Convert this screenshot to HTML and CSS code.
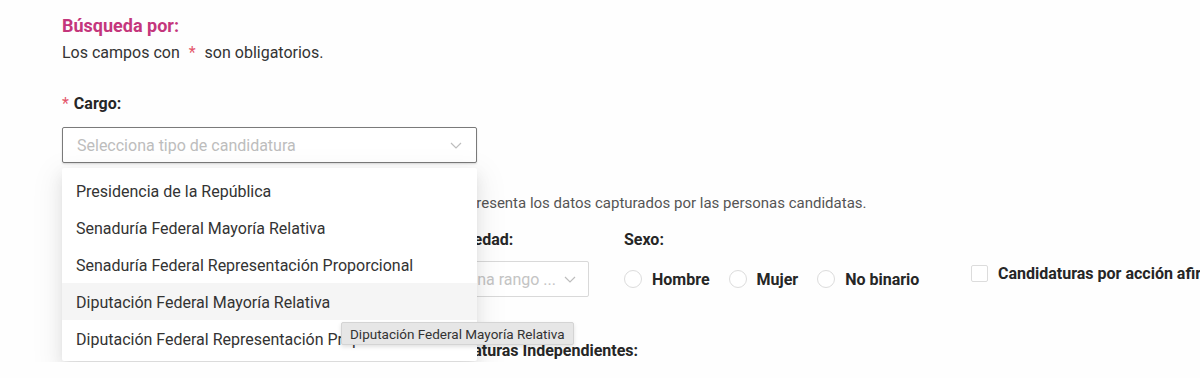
FILE: index.html
```html
<!DOCTYPE html>
<html lang="es">
<head>
  <meta charset="UTF-8" />
  <meta name="viewport" content="width=device-width, initial-scale=1" />
  <title>Búsqueda de candidaturas</title>
  <link rel="stylesheet" href="styles.css">
</head>
<body>
  <main class="page">
    <h2 class="title">Búsqueda por:</h2>
    <p class="hint">Los campos con <span class="req">*</span> son obligatorios.</p>

    <div class="field field-cargo">
      <label class="label"><span class="req">*</span> Cargo:</label>
      <div class="select-wrap">
        <div class="select select-open">
          <span class="placeholder">Selecciona tipo de candidatura</span>
          <svg class="chevron" width="12" height="7" viewBox="0 0 12 7"><path d="M1 1l5 5 5-5" fill="none" stroke="#bdbdbd" stroke-width="1.2"/></svg>
        </div>
        <!-- Menú desplegado -->
        <ul class="dropdown" role="listbox">
          <li>Presidencia de la República</li>
          <li>Senaduría Federal Mayoría Relativa</li>
          <li>Senaduría Federal Representación Proporcional</li>
          <li class="hover">Diputación Federal Mayoría Relativa</li>
          <li>Diputación Federal Representación Proporcional</li>
        </ul>
      </div>
    </div>

    <p class="note">La información que se muestra en este apartado representa los datos capturados por las personas candidatas.</p>

    <div class="filters">
      <div class="filter filter-entidad">
        <div class="label">Entidad federativa:</div>
        <div class="select select-small">
          <span class="placeholder">Selecciona entidad</span>
          <svg class="chevron" width="12" height="7" viewBox="0 0 12 7"><path d="M1 1l5 5 5-5" fill="none" stroke="#bdbdbd" stroke-width="1.2"/></svg>
        </div>
      </div>
      <div class="filter filter-edad">
        <div class="label">Rango de edad:</div>
        <div class="select select-small">
          <span class="placeholder">Selecciona rango ...</span>
          <svg class="chevron" width="12" height="7" viewBox="0 0 12 7"><path d="M1 1l5 5 5-5" fill="none" stroke="#bdbdbd" stroke-width="1.2"/></svg>
        </div>
      </div>
      <div class="filter filter-sexo">
        <div class="label">Sexo:</div>
        <div class="radios">
          <label class="radio"><span class="circle"></span>Hombre</label>
          <label class="radio"><span class="circle"></span>Mujer</label>
          <label class="radio"><span class="circle"></span>No binario</label>
        </div>
      </div>
      <label class="check"><span class="box"></span>Candidaturas por acción afirmativa</label>
    </div>

    <h3 class="subtitle">Candidaturas Independientes:</h3>

    <div class="tooltip">Diputación Federal Mayoría Relativa</div>
  </main>
</body>
</html>
```

FILE: styles.css
```css
* {
  box-sizing: border-box;
}

body {
  margin: 0;
  font-family: Roboto, "Liberation Sans", Arial, sans-serif;
  background-color: #fefefe;
  color: #333;
  overflow: hidden;
}

.page {
  position: relative;
  padding: 14px 0 0 62px;
  white-space: nowrap;
}

.title {
  margin: 0;
  font-size: 18px;
  line-height: 24px;
  font-weight: 700;
  color: #c4367c;
}

.hint {
  margin: 5px 0 0;
  font-size: 16px;
  line-height: 20px;
}

.req {
  color: #e4566a;
  margin: 0 5px;
}

.label .req {
  margin: 0 1px 0 0;
  font-weight: 400;
}

.label {
  font-size: 16px;
  line-height: 20px;
  font-weight: 700;
  color: #262626;
}

.field-cargo {
  margin-top: 31px;
}

.select-wrap {
  position: relative;
  width: 415px;
  margin-top: 13px;
}

.select {
  display: flex;
  align-items: center;
  justify-content: space-between;
  height: 36px;
  padding: 0 14px;
  border: 1px solid #d9d9d9;
  border-radius: 2px;
  background: #fff;
  font-size: 16px;
}

.select-open {
  border-color: #7a7a7a;
  box-shadow: 0 1px 2px rgba(0, 0, 0, 0.15);
}

.placeholder {
  color: #bdbdbd;
  overflow: hidden;
}

.chevron {
  flex: none;
}

/* Menú desplegable */
.dropdown {
  position: absolute;
  top: 41px;
  left: 0;
  right: 0;
  margin: 0;
  padding: 4px 0;
  list-style: none;
  background: #fff;
  border-radius: 2px;
  box-shadow: 0 3px 6px -4px rgba(0, 0, 0, 0.12), 0 6px 16px 0 rgba(0, 0, 0, 0.08), 0 9px 28px 8px rgba(0, 0, 0, 0.05);
  z-index: 10;
}

.dropdown li {
  height: 37px;
  line-height: 39px;
  padding: 0 14px;
  font-size: 16px;
  color: #333;
}

.dropdown li.hover {
  background: #f5f5f5;
}

.note {
  margin: 30px 0 0;
  padding-left: 66px;
  font-size: 15px;
  line-height: 20px;
  color: #555;
}

.filters {
  display: flex;
  gap: 35px;
  margin-top: 17px;
}

.filters > * {
  flex: none;
}

.filter .select {
  margin-top: 11px;
}

.filter-entidad {
  width: 305px;
}

.filter-edad {
  width: 187px;
}

.select-small {
  padding: 0 12px 0 14px;
}

.select-small .placeholder {
  color: #c4c4c4;
}

.filter-sexo {
  width: 312px;
}

.radios {
  display: flex;
  align-items: center;
  gap: 19px;
  height: 36px;
  margin-top: 11px;
}

.radio {
  display: flex;
  align-items: center;
  gap: 10px;
  font-size: 16px;
  font-weight: 700;
  color: #262626;
}

.circle {
  width: 18px;
  height: 18px;
  border: 1px solid #dcdcdc;
  border-radius: 50%;
  background: #fff;
}

.check {
  display: flex;
  align-items: center;
  gap: 10px;
  margin-top: 34px;
  align-self: flex-start;
  font-size: 16px;
  font-weight: 700;
  color: #262626;
}

.box {
  width: 17px;
  height: 17px;
  border: 1px solid #dcdcdc;
  border-radius: 2px;
  background: #fff;
}

.subtitle {
  margin: 43px 0 0;
  padding-left: 361px;
  font-size: 16px;
  line-height: 22px;
  font-weight: 700;
  color: #262626;
}

/* Tooltip nativo sobre la opción */
.tooltip {
  position: absolute;
  left: 341px;
  top: 322px;
  padding: 0 8px;
  height: 23px;
  line-height: 23px;
  font-size: 13.5px;
  color: #333;
  background: #e6e6e6;
  border: 1px solid #d4d4d4;
  border-radius: 2px;
  box-shadow: 0 2px 4px rgba(0, 0, 0, 0.12);
  z-index: 20;
}
```
